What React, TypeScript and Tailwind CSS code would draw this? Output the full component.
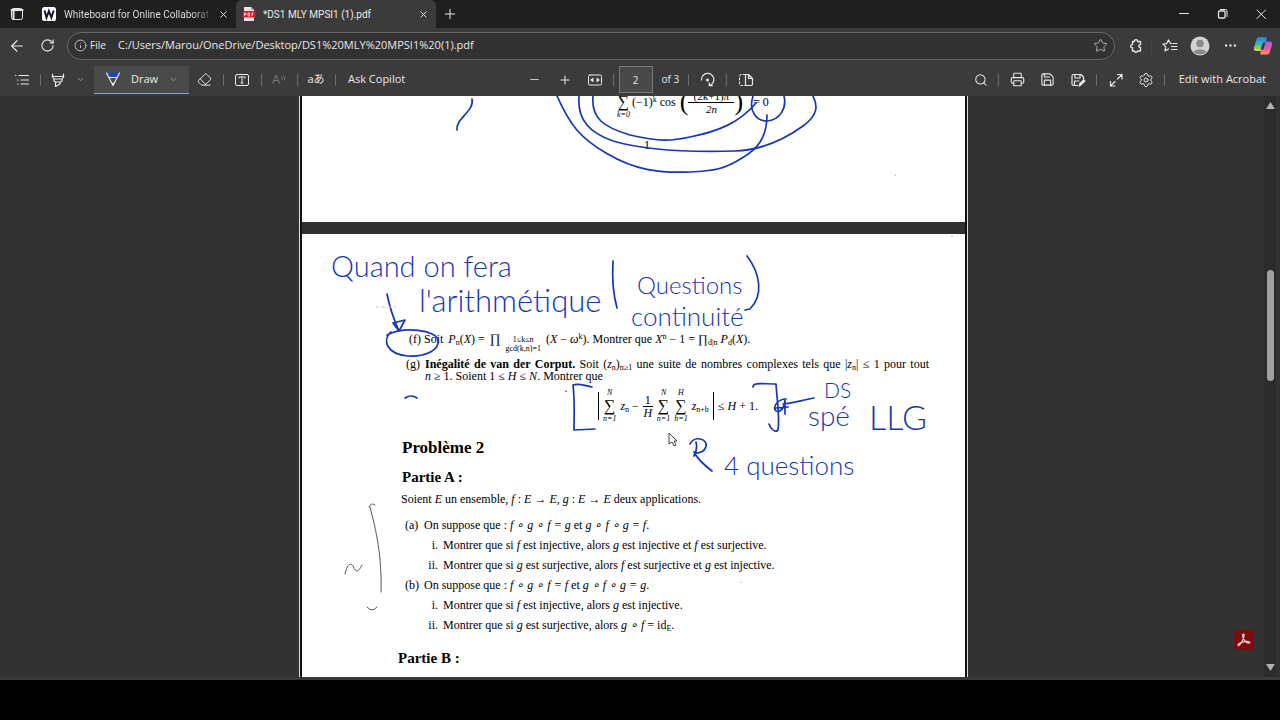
import React from 'react';
import {
  ArrowLeft,
  ChevronDown,
  Eraser,
  Info,
  Minus,
  MoreHorizontal,
  Plus,
  Printer,
  RotateCw,
  Save,
  Search,
  Settings,
  Star,
  X,
} from 'lucide-react';

interface ChildrenProps {
  children: React.ReactNode;
}

interface ToolProps extends ChildrenProps {
  label: string;
  className?: string;
}

const Tool: React.FC<ToolProps> = ({ label, className = 'w-[30px]', children }) => (
  <button type="button" aria-label={label} className={`flex h-7 shrink-0 items-center justify-center ${className}`}>
    {children}
  </button>
);

const Divider = () => (
  <div className="flex w-2 shrink-0 justify-center">
    <div className="h-3 w-px bg-[#6a6a6a]" />
  </div>
);

const Glyph: React.FC<ChildrenProps> = ({ children }) => (
  <svg width="16" height="16" viewBox="0 0 16 16" fill="none" stroke="currentColor" strokeLinecap="round" strokeLinejoin="round">
    {children}
  </svg>
);

/* ---------- tab strip ---------- */

const TabStrip = () => (
  <div className="flex h-7 shrink-0 bg-[#1f1f1f] font-['Roboto',sans-serif]">
    <Tool label="Tab actions" className="w-[34px]">
      <Glyph>
        <rect x="2.5" y="2.5" width="11" height="11" rx="2" />
        <path d="M2.500 4h11M4.500 4v9" strokeWidth="2" />
      </Glyph>
    </Tool>
    <div className="flex w-[202px] items-center pl-2">
      <svg width="14" height="14" viewBox="0 0 14 14" aria-hidden="true">
        <rect width="14" height="14" rx="2.5" fill="#fff" />
        <path d="M2.500 3.500l2 7 2.400-6.500 2.500 6.500 2.300-7" fill="none" stroke="#15152a" strokeWidth="2" />
      </svg>
      <span className="ml-2 w-[151px] overflow-hidden whitespace-nowrap bg-gradient-to-r from-[#e8e8e8] from-85% to-[#1f1f1f] bg-clip-text text-[10px] text-transparent">
        Whiteboard for Online Collaborat
      </span>
      <button type="button" aria-label="Close tab" className="ml-[3px]">
        <X size={11} strokeWidth={2} />
      </button>
    </div>
    <div className="flex w-[200px] items-center rounded-t-md bg-[#3b3b3b] pl-1.5">
      <svg width="14" height="14" viewBox="0 0 14 14" aria-hidden="true">
        <path d="M2 0h7l3 3v11H2z" fill="#f1dfe1" />
        <path d="M9 0l3 3H9z" fill="#d89aa0" />
        <rect x="0.500" y="4" width="13" height="6.500" rx="1" fill="#d41f34" />
        <path d="M2.500 9v-3h1.500v1.500H3M6 6v3h1.500v-3zM10 9v-3h1.500M10 7.500h1" stroke="#fff" strokeWidth=".7" fill="none" />
      </svg>
      <span className="ml-[7px] flex-1 whitespace-nowrap text-[10px]">*DS1 MLY MPSI1 (1).pdf</span>
      <button type="button" aria-label="Close tab" className="mr-[7px]">
        <X size={11} strokeWidth={2} />
      </button>
    </div>
    <Tool label="New tab" className="w-7">
      <Plus size={16} strokeWidth={1.5} />
    </Tool>
    <div className="flex-1" />
    <Tool label="Minimize" className="w-[39px]">
      <Glyph>
        <path d="M3.500 7.500h9" />
      </Glyph>
    </Tool>
    <Tool label="Restore" className="w-[39px]">
      <Glyph>
        <rect x="3.500" y="5" width="6.500" height="7" rx="1" strokeWidth="1.300" />
        <path d="M5.500 3.500h5a1.500 1.500 0 0 1 1.500 1.500v5.500" />
      </Glyph>
    </Tool>
    <Tool label="Close" className="w-[38px]">
      <Glyph>
        <path d="M4 4l8.500 8.500M12.500 4L4 12.500" />
      </Glyph>
    </Tool>
  </div>
);

/* ---------- address bar ---------- */

const CopilotLogo = () => (
  <svg width="20" height="20" viewBox="0 0 20 20" aria-hidden="true">
    <defs>
      <linearGradient id="copilotLeft" x1="0" y1="0" x2="0" y2="1">
        <stop offset="0" stopColor="#2a7fe0" />
        <stop offset=".5" stopColor="#35b8b0" />
        <stop offset="1" stopColor="#e8d13a" />
      </linearGradient>
      <linearGradient id="copilotRight" x1="0" y1="0" x2="0" y2="1">
        <stop offset="0" stopColor="#a35ce8" />
        <stop offset=".6" stopColor="#ee5c9c" />
        <stop offset="1" stopColor="#f79a55" />
      </linearGradient>
    </defs>
    <path d="M6 1h6.500c1.500 0 1.500 1 1 2.500l-3 9.500c-.5 1.500-1.200 2-2.500 2H3c-2 0-2.500-1.500-2-3.500L3.500 3.500C4 1.800 4.500 1 6 1z" fill="url(#copilotLeft)" />
    <path d="M12.500 5.500H17c2 0 2.500 1.500 2 3.500L16.800 16c-.5 1.800-1.300 2.500-2.800 2.500H8.500c-1.500 0-1.500-1-1-2.500l2.700-8.500c.4-1.400 1-2 2.300-2z" fill="url(#copilotRight)" />
    <path d="M10 6.500h2.500l-2 7H7.500z" fill="#3b3b3b" />
  </svg>
);

const AddressBar = () => (
  <div className="flex h-[35px] shrink-0 items-center bg-[#3b3b3b] pl-0.5">
    <Tool label="Back">
      <ArrowLeft size={18} strokeWidth={1.5} />
    </Tool>
    <Tool label="Refresh">
      <RotateCw size={15} strokeWidth={1.75} />
    </Tool>
    <div className="mr-1.5 ml-[5px] flex h-7 flex-1 items-center rounded-full border border-[#666] bg-[#323232] px-1.5">
      <Info size={13} strokeWidth={1.75} className="text-[#c8c8c8]" />
      <label htmlFor="url" className="ml-[3px] w-7 text-[10px]">
        File
      </label>
      <input
        id="url"
        className="min-w-0 flex-1 bg-transparent text-[11px] outline-none"
        defaultValue="C:/Users/Marou/OneDrive/Desktop/DS1%20MLY%20MPSI1%20(1).pdf"
      />
      <button type="button" aria-label="Add to favorites">
        <Star size={15} strokeWidth={1.5} className="text-[#b5b5b5]" />
      </button>
    </div>
    <Tool label="Extensions">
      <Glyph>
        <path
          d="M4.500 3.500h2c-.3-2.600 3.300-2.600 3 0h3v3.200c-2.400-.3-2.400 3 0 2.700v3.600h-3c0 1.900-3 1.900-3 0h-2V9.700c-2.500.2-2.500-3.300 0-3z"
          strokeWidth="1.300"
        />
      </Glyph>
    </Tool>
    <div className="h-4 w-1 border-l border-[#464646]" />
    <Tool label="Favorites">
      <Glyph>
        <path d="M9.500 5.700L8.500 5.500 6.500 2 4.700 5.600 1 6.200l2.700 2.700-.7 4 3.500-1.900M11 5.500h4M9.500 8.500H15M9.500 11.500H15" strokeWidth="1.200" />
      </Glyph>
    </Tool>
    <Tool label="Profile">
      <svg width="20" height="20" viewBox="0 0 20 20">
        <circle cx="10" cy="10" r="9.500" fill="#d2d2d2" />
        <circle cx="10" cy="7.500" r="3.800" fill="#8b8b8b" />
        <path d="M3.500 16a7 4.500 0 0 1 13 0 9.500 9.500 0 0 1-13 0z" fill="#8b8b8b" />
      </svg>
    </Tool>
    <Tool label="Settings and more">
      <MoreHorizontal size={15} strokeWidth={1.75} />
    </Tool>
    <Tool label="Copilot" className="w-[35px]">
      <CopilotLogo />
    </Tool>
  </div>
);

/* ---------- pdf toolbar ---------- */

const PdfToolbar = () => (
  <div className="grid h-[33px] shrink-0 grid-cols-[1fr_auto_1fr] items-center bg-[#3b3b3b] text-[11px]">
    <div className="flex items-center pl-2">
      <Tool label="Contents" className="w-7">
        <Glyph>
          <path d="M1.500 3.500h.5M5 3.500h9.500M3.500 8h.5M7 8h7.500M3.500 12h.5M7 12h7.500" strokeWidth="1.200" />
        </Glyph>
      </Tool>
      <Divider />
      <Tool label="Highlight" className="w-7">
        <Glyph>
          <path d="M2.500 2v3l1.500 2h8l1.500-2V2M4 7v2l1.500 1h5l1.500-1V7M5.500 10v4.500l4.500-2.500v-2M3 4.500h10" strokeWidth="1.200" />
        </Glyph>
      </Tool>
      <Tool label="Highlight options" className="w-4">
        <ChevronDown size={9} className="text-[#aaa]" />
      </Tool>
      <button type="button" className="ml-1.5 flex h-7 w-[95px] items-center border-b border-[#6fa8d6] bg-[#4a4a4a] pl-[11px]">
        <Glyph>
          <path d="M1.500 2h13l-2 4.500h-9z" fill="#2345b8" stroke="#2345b8" />
          <path d="M1.500 2L8 14.500 14.500 2M4 6.500h8M8 12v2" strokeWidth="1.200" />
        </Glyph>
        <span className="ml-[10px] w-[38px] text-left">Draw</span>
        <ChevronDown size={9} className="text-[#aaa]" />
      </button>
      <Tool label="Erase">
        <Eraser size={15} strokeWidth={1.5} />
      </Tool>
      <Divider />
      <Tool label="Add text">
        <Glyph>
          <rect x="1.500" y="2.500" width="13" height="11" rx="1.500" />
          <path d="M5 6V5h6v1M8 5v6M7 11h2" />
        </Glyph>
      </Tool>
      <Divider />
      <Tool label="Read aloud" className="w-7 text-[#777]">
        <span className="text-[13px]">A</span>
        <svg width="6" height="14" viewBox="0 0 6 14" fill="none" stroke="currentColor">
          <path d="M1 3.500q1.500 1.500 1 3.500M3 2q2.500 2.500 1.500 5.500" />
        </svg>
      </Tool>
      <Divider />
      <Tool label="Translate">
        <span className="text-[11px]">aあ</span>
      </Tool>
      <Divider />
      <button type="button" className="px-[9px] whitespace-nowrap">
        Ask Copilot
      </button>
    </div>

    <div className="flex items-center">
      <Tool label="Zoom out">
        <Minus size={13} strokeWidth={1.5} />
      </Tool>
      <Tool label="Zoom in">
        <Plus size={14} strokeWidth={1.75} />
      </Tool>
      <Tool label="Fit to width">
        <Glyph>
          <rect x="1.500" y="3" width="13" height="10" rx="1.500" />
          <path d="M6 6.500L4 8l2 1.500M10 6.500L12 8l-2 1.500M4 8h2.500M9.500 8H12" strokeWidth="1.200" />
        </Glyph>
      </Tool>
      <Divider />
      <input aria-label="Page number" defaultValue="2" className="mx-px h-[27px] w-[34px] border border-[#787878] bg-[#484848] text-center text-[10px] outline-none" />
      <span className="w-[31px] pl-2 text-[10px] whitespace-nowrap">of 3</span>
      <Divider />
      <Tool label="Rotate">
        <Glyph>
          <path d="M1.500 8A6.200 6.200 0 1 1 9.500 13.500M9.300 10.800V13.700H12.300" strokeWidth="1.200" />
          <circle cx="7.500" cy="8" r="1.500" fill="currentColor" stroke="none" />
        </Glyph>
      </Tool>
      <Divider />
      <Tool label="Page view">
        <Glyph>
          <path d="M7.500 2.500v11H13a1.500 1.500 0 0 0 1.500-1.500V6.500L10.500 2.500zM10.500 2.500v4h4" strokeWidth="1.200" />
          <path d="M7 2.500H3A1.500 1.500 0 0 0 1.500 4v8A1.500 1.500 0 0 0 3 13.500h4" strokeDasharray="2 2" />
        </Glyph>
      </Tool>
    </div>

    <div className="flex items-center justify-end">
      <Tool label="Find" className="w-7">
        <Search size={14} strokeWidth={1.75} />
      </Tool>
      <Divider />
      <Tool label="Print">
        <Printer size={15} strokeWidth={1.75} />
      </Tool>
      <Tool label="Save">
        <Save size={15} strokeWidth={1.75} />
      </Tool>
      <Tool label="Save as">
        <Glyph>
          <path d="M7.500 13.500H3.500A1.500 1.500 0 0 1 2 12V4a1.500 1.500 0 0 1 1.500-1.500H11l2.500 2.500v2.500M5 2.500V6h5V2.500M4.500 13V9H9" strokeWidth="1.200" />
          <path d="M9 14l.7-2.500 4-4 1.500 1.500-4 4z" fill="currentColor" />
        </Glyph>
      </Tool>
      <Divider />
      <Tool label="Full screen">
        <Glyph>
          <path d="M9.500 2.500h4.500V7M14 2.500L9.500 7M7 9.500L2.500 14M2.500 9.500V14H7" strokeWidth="1.200" />
        </Glyph>
      </Tool>
      <Tool label="Settings">
        <Settings size={16} strokeWidth={1.5} />
      </Tool>
      <Divider />
      <button type="button" className="px-3.5 pl-[10px] whitespace-nowrap">
        Edit with Acrobat
      </button>
    </div>
  </div>
);

/* ---------- document ---------- */

const Sum: React.FC<{ from: string; to?: string }> = ({ from, to }) => (
  <span className="flex flex-col items-center">
    <i className="h-[10px] text-[8px] leading-[10px]">{to}</i>
    <span className="h-4 text-[16px] leading-4">∑</span>
    <i className="h-[10px] text-[8px] leading-[10px]">{from}</i>
  </span>
);

const Sub: React.FC<ChildrenProps> = ({ children }) => <sub className="text-[8px] leading-none">{children}</sub>;

interface QuestionProps extends ChildrenProps {
  mark: string;
}

const Question: React.FC<QuestionProps> = ({ mark, children }) => (
  <p className="flex h-5 items-center pl-[103px]">
    <span className="w-[19px]">{mark}</span>
    <span>{children}</span>
  </p>
);

const SubQuestion: React.FC<QuestionProps> = ({ mark, children }) => (
  <p className="flex h-5 items-center pl-[110px]">
    <span className="w-[26px] text-right">{mark}</span>
    <span className="pl-[5px]">{children}</span>
  </p>
);

const FirstPage = () => (
  <section className="h-[126px] shrink-0 overflow-hidden bg-white">
    <div className="-mt-3 ml-[315px] flex h-9 items-center text-[12px]">
      <Sum from="k=0" />
      <span className="ml-0.5">
        (−1)<sup className="text-[8px]">k</sup> cos
      </span>
      <span className="ml-1 text-[26px] leading-8">(</span>
      <span className="flex w-[46px] flex-col items-center text-[11px]">
        <span className="w-full border-b border-black text-center leading-3">(2k+1)π</span>
        <i className="leading-3">2n</i>
      </span>
      <span className="text-[26px] leading-8">)</span>
      <span className="ml-2.5">= 0</span>
    </div>
    <p className="mt-4 pl-[342px] text-[12px]">1</p>
  </section>
);

const SecondPage = () => (
  <section className="flex-1 overflow-hidden bg-white">
    <p className="mt-[95px] ml-[107px] flex h-5 items-center gap-[5px]">
      <span>(f) Soit</span>
      <span>
        <i>P</i>
        <Sub>n</Sub>(<i>X</i>) =
      </span>
      <span className="text-[13px]">∏</span>
      <span className="mt-2.5 flex flex-col items-center text-[8px] leading-[9px]">
        <span>1≤k≤n</span>
        <span>gcd(k,n)=1</span>
      </span>
      <span>
        (<i>X</i> − <i>ω</i>
        <sup className="text-[8px] leading-none">k</sup>). Montrer que <i>X</i>
        <sup className="text-[8px] leading-none">n</sup> − 1 = ∏<Sub>d|n</Sub> <i>P</i>
        <Sub>d</Sub>(<i>X</i>).
      </span>
    </p>
    <div className="mt-[9px] mr-9 ml-[104px] flex leading-3">
      <span className="w-[19px] shrink-0">(g)</span>
      <div className="flex-1">
        <p className="h-3 whitespace-nowrap [text-align-last:justify]">
          <b>Inégalité de van der Corput.</b> Soit (<i>z</i>
          <Sub>n</Sub>)<Sub>n≥1</Sub> une suite de nombres complexes tels que |<i>z</i>
          <Sub>n</Sub>| ≤ 1 pour tout
        </p>
        <p className="h-3">
          <i>n</i> ≥ 1. Soient 1 ≤ <i>H</i> ≤ <i>N</i>. Montrer que
        </p>
      </div>
    </div>
    <div className="mt-1 ml-[296px] flex h-10 items-center gap-1 text-[12px]">
      <span className="h-7 w-px bg-black" />
      <Sum from="n=1" to="N" />
      <span>
        <i>z</i>
        <Sub>n</Sub> −
      </span>
      <span className="flex flex-col items-center leading-3">
        <span className="border-b border-black px-0.5">1</span>
        <i>H</i>
      </span>
      <Sum from="n=1" to="N" />
      <Sum from="h=1" to="H" />
      <span>
        <i>z</i>
        <Sub>n+h</Sub>
      </span>
      <span className="h-7 w-px bg-black" />
      <span>
        ≤ <i>H</i> + 1.
      </span>
    </div>
    <h2 className="mt-3 pl-[100px] text-[17px] leading-5 font-bold">Problème 2</h2>
    <h3 className="mt-[9px] pl-[100px] text-[15px] leading-5 font-bold">Partie A :</h3>
    <p className="mt-0.5 pl-[99px] leading-5">
      Soient <i>E</i> un ensemble, <i>f</i> : <i>E</i> → <i>E</i>, <i>g</i> : <i>E</i> → <i>E</i> deux applications.
    </p>
    <div className="mt-1.5">
      <Question mark="(a)">
        On suppose que : <i>f ∘ g ∘ f = g</i> et <i>g ∘ f ∘ g = f</i>.
      </Question>
      <SubQuestion mark="i.">
        Montrer que si <i>f</i> est injective, alors <i>g</i> est injective et <i>f</i> est surjective.
      </SubQuestion>
      <SubQuestion mark="ii.">
        Montrer que si <i>g</i> est surjective, alors <i>f</i> est surjective et <i>g</i> est injective.
      </SubQuestion>
      <Question mark="(b)">
        On suppose que : <i>f ∘ g ∘ f = f</i> et <i>g ∘ f ∘ g = g</i>.
      </Question>
      <SubQuestion mark="i.">
        Montrer que si <i>f</i> est injective, alors <i>g</i> est injective.
      </SubQuestion>
      <SubQuestion mark="ii.">
        Montrer que si <i>g</i> est surjective, alors <i>g ∘ f</i> = id<Sub>E</Sub>.
      </SubQuestion>
    </div>
    <h3 className="mt-[13px] pl-24 text-[15px] leading-5 font-bold">Partie B :</h3>
  </section>
);

const NOTES = [
  { x: 331, y: 277, size: 29, text: 'Quand on fera' },
  { x: 419, y: 312, size: 31, text: "l'arithmétique" },
  { x: 637, y: 294, size: 24, text: 'Questions' },
  { x: 631, y: 326, size: 26, text: 'continuité' },
  { x: 824, y: 398, size: 21, text: 'DS' },
  { x: 808, y: 426, size: 28, text: 'spé' },
  { x: 869, y: 430, size: 34, text: 'LLG' },
  { x: 724, y: 475, size: 26, text: '4 questions' },
];

// pen layer shared by both pages
const Ink = () => (
  <svg className="pointer-events-none absolute top-0 left-0" width="663" height="581" viewBox="302 96 663 581" fill="none">
    <g stroke="#1636b4" strokeWidth="1.700" strokeLinecap="round" strokeLinejoin="round">
      <path d="M472 99c3 12-17 20-15 31" />
      <path d="M557 96C570 125 580 138 606 153C636 171 660 173 690 172C714 171 725 169 742 158C756 150 767 139 767 115" />
      <path d="M579 96C577 120 590 133 613 141C650 152 700 152 735 151C762 150 785 139 803 126C818 115 818 106 813 96" />
      <path d="M593 96C591 118 603 127 630 135C660 142 672 141 690 137C720 131 740 122 756 103" />
      <path d="M753 96C748 112 757 121 767 121C780 120 787 108 784 96" />
      <path d="M387 294C389 304 394 320 399 331M393 323L405 320L399 331L393 323" />
      <path d="M391 332C382 340 386 354 408 356C427 357 440 349 438 340C436 330 404 326 387 335" />
      <path d="M613 261C612 278 613 294 617 308M747 256C760 273 764 295 750 309L745 310" />
      <path d="M592 387C585 386 580 383 573 385C575 400 574 415 574 430L595 429" />
      <path d="M753 387C753 382 763 384 776 384C777 400 780 418 778 430C776 433 771 430 769 424" />
      <path d="M814 398C803 400 793 403 783 404M786 399C778 399 772 407 776 411C782 413 785 405 785 399V414M776 408L788 407" />
      <path d="M405 398Q411 394 417 398" />
      <path d="M694 456C697 450 697 445 696 442M690 444C694 435 708 439 706 446C705 452 698 454 694 452C698 460 704 465 712 471" />
    </g>
    <g fill="#1636b4" className="font-['Lato','Open_Sans',sans-serif] font-light">
      {NOTES.map((note) => (
        <text key={note.text} x={note.x} y={note.y} fontSize={note.size}>
          {note.text}
        </text>
      ))}
    </g>
    <g stroke="#555" strokeLinecap="round">
      <path d="M369 507Q371 502 375 505M370 507C376 530 382 555 381 592M367 607Q372 613 377 607M345 574C347 565 350 562 353 566C356 573 358 573 362 565" />
      <path d="M376 307h20" stroke="#ccc" strokeDasharray="3 3" />
      <path d="M566 391v.5" strokeWidth="1.500" />
      <path d="M952 236v.5M895 175v.5M741 582v.5" stroke="#999" />
    </g>
    <path d="M669 433v11l3-2 2 4 2-1-2-4h3z" fill="#fff" stroke="#444" />
  </svg>
);

const Viewer = () => (
  <main className="flex min-h-0 flex-1 bg-[#323232] pr-1">
    <div className="flex min-w-0 flex-1 justify-center overflow-hidden pl-[3px]">
      <div className="flex border-x border-[#ddd]">
        <div className="relative flex w-[667px] flex-col gap-3 border-x-2 border-[#111] bg-[#303030] font-['Liberation_Serif',serif] text-[12px] text-black">
          <FirstPage />
          <SecondPage />
          <Ink />
        </div>
      </div>
    </div>
    <div className="relative w-3 shrink-0 bg-[#2b2b2b]">
      <div className="flex h-full flex-col items-center justify-between py-1.5">
        <svg width="9" height="7" viewBox="0 0 9 7" fill="#b0b0b0">
          <path d="M4.500 0L9 7H0z" />
        </svg>
        <svg width="9" height="7" viewBox="0 0 9 7" fill="#b0b0b0">
          <path d="M4.500 7L9 0H0z" />
        </svg>
      </div>
      <div className="absolute top-[30%] left-[3px] h-[19%] w-[7px] rounded-full bg-[#a0a0a0]" />
      <button
        type="button"
        aria-label="Open in Acrobat"
        className="absolute right-[22px] bottom-[27px] flex size-5 items-center justify-center rounded-sm bg-[#7d0c10]"
      >
        <svg width="16" height="16" viewBox="0 0 16 16" fill="none" stroke="#f3c9c9" strokeWidth="1.200">
          <path d="M7.500 2c-1.500 0-1 3 .5 5.500s4 4 5.500 3.500c1.500-1.500-3-2-6-1.200S1.500 12 2 13.300c1.200 1.200 3.500-2.500 4.700-5.300S9 2 7.500 2z" />
        </svg>
      </button>
    </div>
  </main>
);

const App = () => (
  <div className="h-screen bg-black pb-10 font-['Open_Sans','Noto_Sans','Noto_Sans_CJK_JP',sans-serif] text-[#e8e8e8]">
    <div className="flex h-full flex-col border-b-[3px] border-[#3a3a3a] bg-[#3b3b3b]">
      <TabStrip />
      <AddressBar />
      <PdfToolbar />
      <Viewer />
    </div>
  </div>
);

export default App;
